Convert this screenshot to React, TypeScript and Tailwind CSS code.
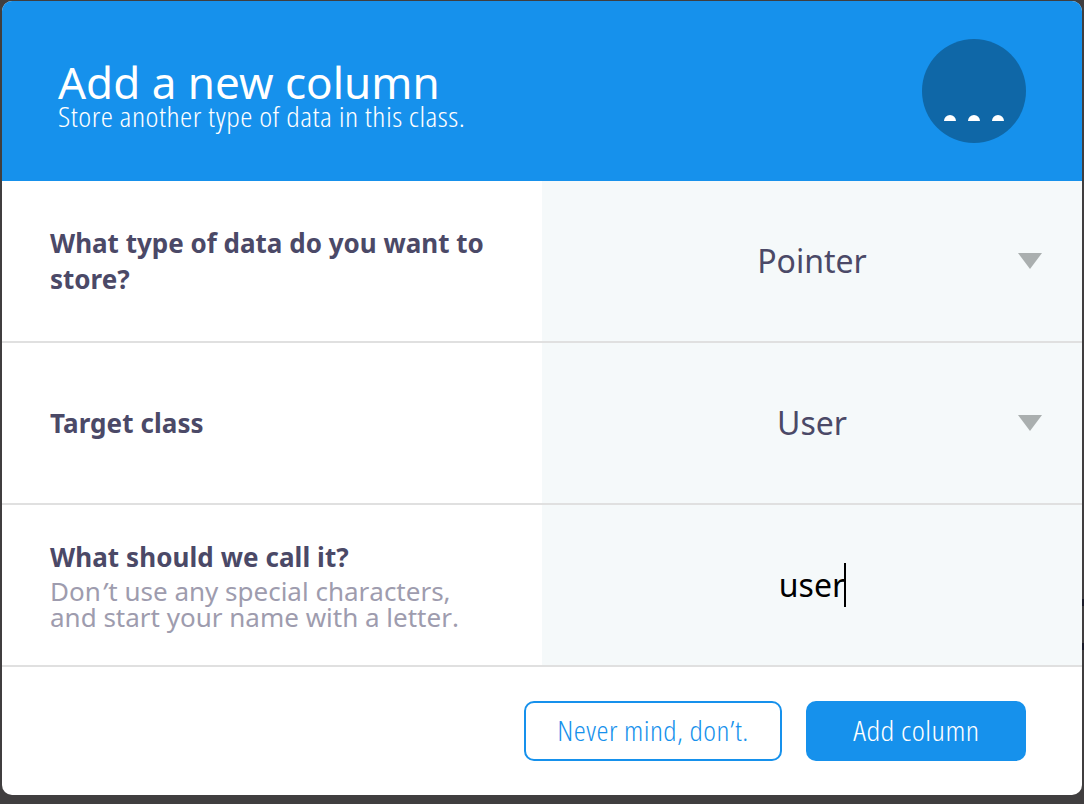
import type { ReactNode } from 'react';

const condensed = "font-['Open_Sans','Noto_Sans',sans-serif] font-light [font-stretch:75%] tracking-[0.4px]";

function Field({ label, children }: { label: ReactNode; children: ReactNode }) {
  return (
    <div className="flex h-[162px] border-b-2 border-[#e0e0e0]">
      <div className="flex w-1/2 flex-col justify-center pl-12 pr-10 text-[26px] leading-9 text-[#4b4967]">{label}</div>
      <div className="relative flex w-1/2 items-center justify-center bg-[#f5f9fa] text-[32px] text-[#4b4967]">{children}</div>
    </div>
  );
}

function Arrow() {
  return (
    <svg className="absolute right-10 top-[72px] h-4 w-6" viewBox="0 0 24 16">
      <path d="M0 0h24L12 16z" fill="#aaafaf" />
    </svg>
  );
}

export default function App() {
  return (
    <main className="relative h-[804px] w-[1084px] overflow-hidden bg-[#403e3f] pl-0.5 pt-px font-['Noto_Sans',sans-serif]">
      <span className="absolute right-0 top-[599px] h-[7px] w-0.5 bg-[#1c1c2a]" />
      <span className="absolute right-0 top-[643px] h-[7px] w-0.5 bg-[#1c1c2a]" />
      <section className="h-[794px] w-[1080px] overflow-hidden rounded-[10px] bg-white">
        <header className="flex h-[180px] items-center justify-between bg-[#1691ec] px-14 text-white">
          <div className="flex flex-col items-start pt-2">
            <h1 className="whitespace-nowrap text-[44px] leading-[44px]">Add a new column</h1>
            <p className={`${condensed} origin-left scale-x-[1.144] whitespace-nowrap text-[27px] leading-[26px]`}>Store another type of data in this class.</p>
          </div>
          <svg className="size-[104px]" viewBox="0 0 104 104">
            <circle cx="52" cy="52" r="52" fill="#0f67a7" />
            <path d="M22 82a6 6 0 0 1 12 0zM46 82a6 6 0 0 1 12 0zM70 82a6 6 0 0 1 12 0z" fill="white" />
          </svg>
        </header>
        <Field label={<p className="font-bold">What type of data do you want to store?</p>}>
          <span>Pointer</span>
          <Arrow />
        </Field>
        <Field label={<p className="font-bold tracking-[0.08px]">Target class</p>}>
          <span>User</span>
          <Arrow />
        </Field>
        <Field
          label={
            <>
              <p className="pb-[3px] font-bold tracking-[0.08px]">What should we call it?</p>
              <p className="whitespace-nowrap pb-px leading-[26px] text-[#9e9cae] [font-kerning:none]">
                Don<span className="pl-px pr-0.5 italic">’</span>t use any special characters,
                <br />
                and start your name with a letter.
              </p>
            </>
          }
        >
          <span className="relative text-black">
            user
            <span className="absolute -right-px top-0.5 h-11 w-0.5 bg-black" />
          </span>
        </Field>
        <footer className="flex h-32 items-center justify-end gap-6 pr-14">
          <button className={`${condensed} flex h-[60px] w-[258px] items-center justify-center rounded-[10px] border-2 border-[#1691ec] text-[27px] text-[#1691ec]`}>
            <span className="scale-x-[1.125] whitespace-nowrap">Never mind, don’t.</span>
          </button>
          <button className={`${condensed} flex h-[60px] w-[220px] items-center justify-center rounded-[10px] bg-[#1691ec] text-[27px] text-white`}>
            <span className="scale-x-[1.16] whitespace-nowrap">Add column</span>
          </button>
        </footer>
      </section>
    </main>
  );
}
